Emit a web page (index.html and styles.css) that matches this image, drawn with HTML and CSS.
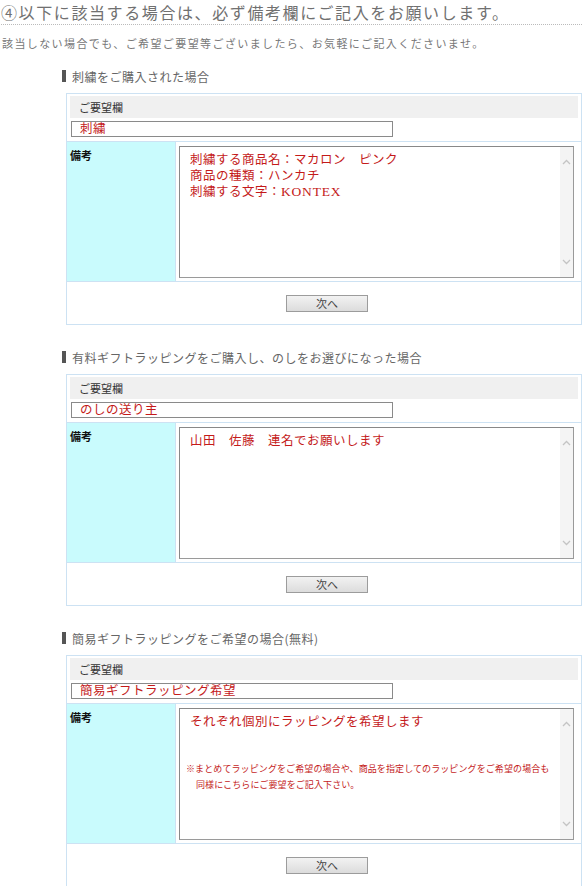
FILE: index.html
```html
<!DOCTYPE html>
<html lang="ja">
<head>
    <meta charset="UTF-8">
    <title>備考欄のご記入について</title>
    <link rel="stylesheet" href="styles.css">
</head>
<body>
    <h1 class="title">④以下に該当する場合は、必ず備考欄にご記入をお願いします。</h1>
    <p class="lead">該当しない場合でも、ご希望ご要望等ございましたら、お気軽にご記入くださいませ。</p>

    <!-- 刺繍 -->
    <div class="section">
        <h2 class="section-title">刺繍をご購入された場合</h2>
        <div class="form-box">
            <div class="req-cell">
                <div class="req-label">ご要望欄</div>
                <div class="req-input">刺繍</div>
            </div>
            <div class="note-row">
                <div class="note-label">備考</div>
                <div class="note-field">
                    <div class="fake-textarea">
                        <div class="fake-text">
                            <div class="line">刺繍する商品名：マカロン　ピンク</div>
                            <div class="line">商品の種類：ハンカチ</div>
                            <div class="line">刺繍する文字：<span class="latin">KONTEX</span></div>
                        </div>
                        <div class="scrollbar">
                            <svg width="9" height="6" viewBox="0 0 9 6"><polyline points="1,5 4.5,1.5 8,5" fill="none" stroke="#c4c4c4" stroke-width="1.3"/></svg>
                            <svg width="9" height="6" viewBox="0 0 9 6"><polyline points="1,1 4.5,4.5 8,1" fill="none" stroke="#c4c4c4" stroke-width="1.3"/></svg>
                        </div>
                    </div>
                </div>
            </div>
            <div class="btn-row">
                <button class="next-btn">次へ</button>
            </div>
        </div>
    </div>

    <!-- のし -->
    <div class="section">
        <h2 class="section-title">有料ギフトラッピングをご購入し、のしをお選びになった場合</h2>
        <div class="form-box">
            <div class="req-cell">
                <div class="req-label">ご要望欄</div>
                <div class="req-input">のしの送り主</div>
            </div>
            <div class="note-row">
                <div class="note-label">備考</div>
                <div class="note-field">
                    <div class="fake-textarea">
                        <div class="fake-text">
                            <div class="line">山田　佐藤　連名でお願いします</div>
                        </div>
                        <div class="scrollbar">
                            <svg width="9" height="6" viewBox="0 0 9 6"><polyline points="1,5 4.5,1.5 8,5" fill="none" stroke="#c4c4c4" stroke-width="1.3"/></svg>
                            <svg width="9" height="6" viewBox="0 0 9 6"><polyline points="1,1 4.5,4.5 8,1" fill="none" stroke="#c4c4c4" stroke-width="1.3"/></svg>
                        </div>
                    </div>
                </div>
            </div>
            <div class="btn-row">
                <button class="next-btn">次へ</button>
            </div>
        </div>
    </div>

    <!-- 簡易ラッピング -->
    <div class="section">
        <h2 class="section-title">簡易ギフトラッピングをご希望の場合(無料)</h2>
        <div class="form-box">
            <div class="req-cell">
                <div class="req-label">ご要望欄</div>
                <div class="req-input">簡易ギフトラッピング希望</div>
            </div>
            <div class="note-row">
                <div class="note-label">備考</div>
                <div class="note-field">
                    <div class="fake-textarea">
                        <div class="fake-text">
                            <div class="line">それぞれ個別にラッピングを希望します</div>
                            <div class="fake-note">
                                <div class="note-line">※まとめてラッピングをご希望の場合や、商品を指定してのラッピングをご希望の場合も</div>
                                <div class="note-line indent">同様にこちらにご要望をご記入下さい。</div>
                            </div>
                        </div>
                        <div class="scrollbar">
                            <svg width="9" height="6" viewBox="0 0 9 6"><polyline points="1,5 4.5,1.5 8,5" fill="none" stroke="#c4c4c4" stroke-width="1.3"/></svg>
                            <svg width="9" height="6" viewBox="0 0 9 6"><polyline points="1,1 4.5,4.5 8,1" fill="none" stroke="#c4c4c4" stroke-width="1.3"/></svg>
                        </div>
                    </div>
                </div>
            </div>
            <div class="btn-row">
                <button class="next-btn">次へ</button>
            </div>
        </div>
    </div>
</body>
</html>
```

FILE: styles.css
```css
body {
    margin: 0;
    padding: 0 2px 0 1px;
    font-family: "Noto Sans CJK JP", "Liberation Serif", serif;
    color: #666;
    background: #fff;
}

.title {
    margin: 0;
    height: 24px;
    line-height: 24px;
    font-size: 16px;
    font-weight: normal;
    letter-spacing: 1.6px;
    color: #707070;
    border-bottom: 1px dotted #bbb;
    white-space: nowrap;
}

.lead {
    margin: 10px 0 0 1px;
    font-size: 11px;
    line-height: 16px;
    letter-spacing: 1.4px;
    color: #777;
    white-space: nowrap;
}

.section {
    margin-top: 17px;
}

.section + .section {
    margin-top: 24px;
}

.section-title {
    display: flex;
    align-items: center;
    gap: 6px;
    margin: 0 0 9px 61px;
    height: 16px;
    font-size: 12px;
    font-weight: normal;
    letter-spacing: 0.5px;
    color: #666;
    white-space: nowrap;
}

.section-title::before {
    content: "";
    display: block;
    width: 4px;
    height: 12px;
    background: #555;
}

.form-box {
    margin-left: 65px;
    width: 514px;
    border: 1px solid #cde2f3;
}

.req-cell {
    padding: 2px 3px 4px 3px;
    border-bottom: 1px solid #cde2f3;
}

.req-label {
    height: 22px;
    line-height: 22px;
    padding-left: 9px;
    background: #f0f0f0;
    font-family: "Noto Sans CJK JP", "Liberation Sans", sans-serif;
    font-size: 11px;
    font-weight: normal;
    color: #333;
}

.req-input {
    margin: 3px 0 0 1px;
    width: 312px;
    height: 14px;
    line-height: 15px;
    padding: 0 0 0 8px;
    border: 1px solid #8a8a8a;
    font-family: "Liberation Serif", "Noto Sans CJK JP", serif;
    font-size: 12.5px;
    color: #c41a1a;
    letter-spacing: 0.5px;
    white-space: nowrap;
}

.note-row {
    display: flex;
    border-bottom: 1px solid #cde2f3;
}

.note-label {
    width: 105px;
    padding: 5px 0 0 3px;
    background: #c9fbfd;
    border-right: 1px solid #cde2f3;
    font-family: "Noto Sans CJK JP", "Liberation Sans", sans-serif;
    font-size: 11px;
    font-weight: bold;
    color: #111;
}

.note-field {
    padding: 4px 0 3px 3px;
}

.fake-textarea {
    display: flex;
    width: 393px;
    height: 130px;
    border: 1px solid #9a9a9a;
    border-top-color: #888;
    border-left-color: #888;
    background: #fff;
}

.fake-text {
    flex: 1;
    padding: 5px 0 0 10px;
    font-family: "Liberation Serif", "Noto Sans CJK JP", serif;
    font-size: 12.5px;
    letter-spacing: 0.5px;
    color: #c41a1a;
}

.line {
    height: 16px;
    line-height: 16px;
    white-space: nowrap;
}

.latin {
    font-size: 13.5px;
    letter-spacing: 0.8px;
}

.fake-note {
    margin: 31px 0 0 -4px;
    font-size: 9px;
    letter-spacing: 0.1px;
}

.note-line {
    height: 16px;
    line-height: 16px;
    white-space: nowrap;
}

.indent {
    padding-left: 10px;
}

.scrollbar {
    width: 13px;
    display: flex;
    flex-direction: column;
    justify-content: space-between;
    align-items: center;
    padding: 12px 0 12px;
    background: #f4f4f4;
}

.btn-row {
    height: 42px;
    display: flex;
    align-items: center;
    justify-content: center;
    padding-left: 6px;
}

.next-btn {
    width: 82px;
    height: 17px;
    padding: 0;
    border: 1px solid #9c9c9c;
    background: linear-gradient(#f2f2f2, #dcdcdc);
    font-family: "Noto Sans CJK JP", "Liberation Sans", sans-serif;
    font-size: 11px;
    line-height: 15px;
    color: #444;
}
```
